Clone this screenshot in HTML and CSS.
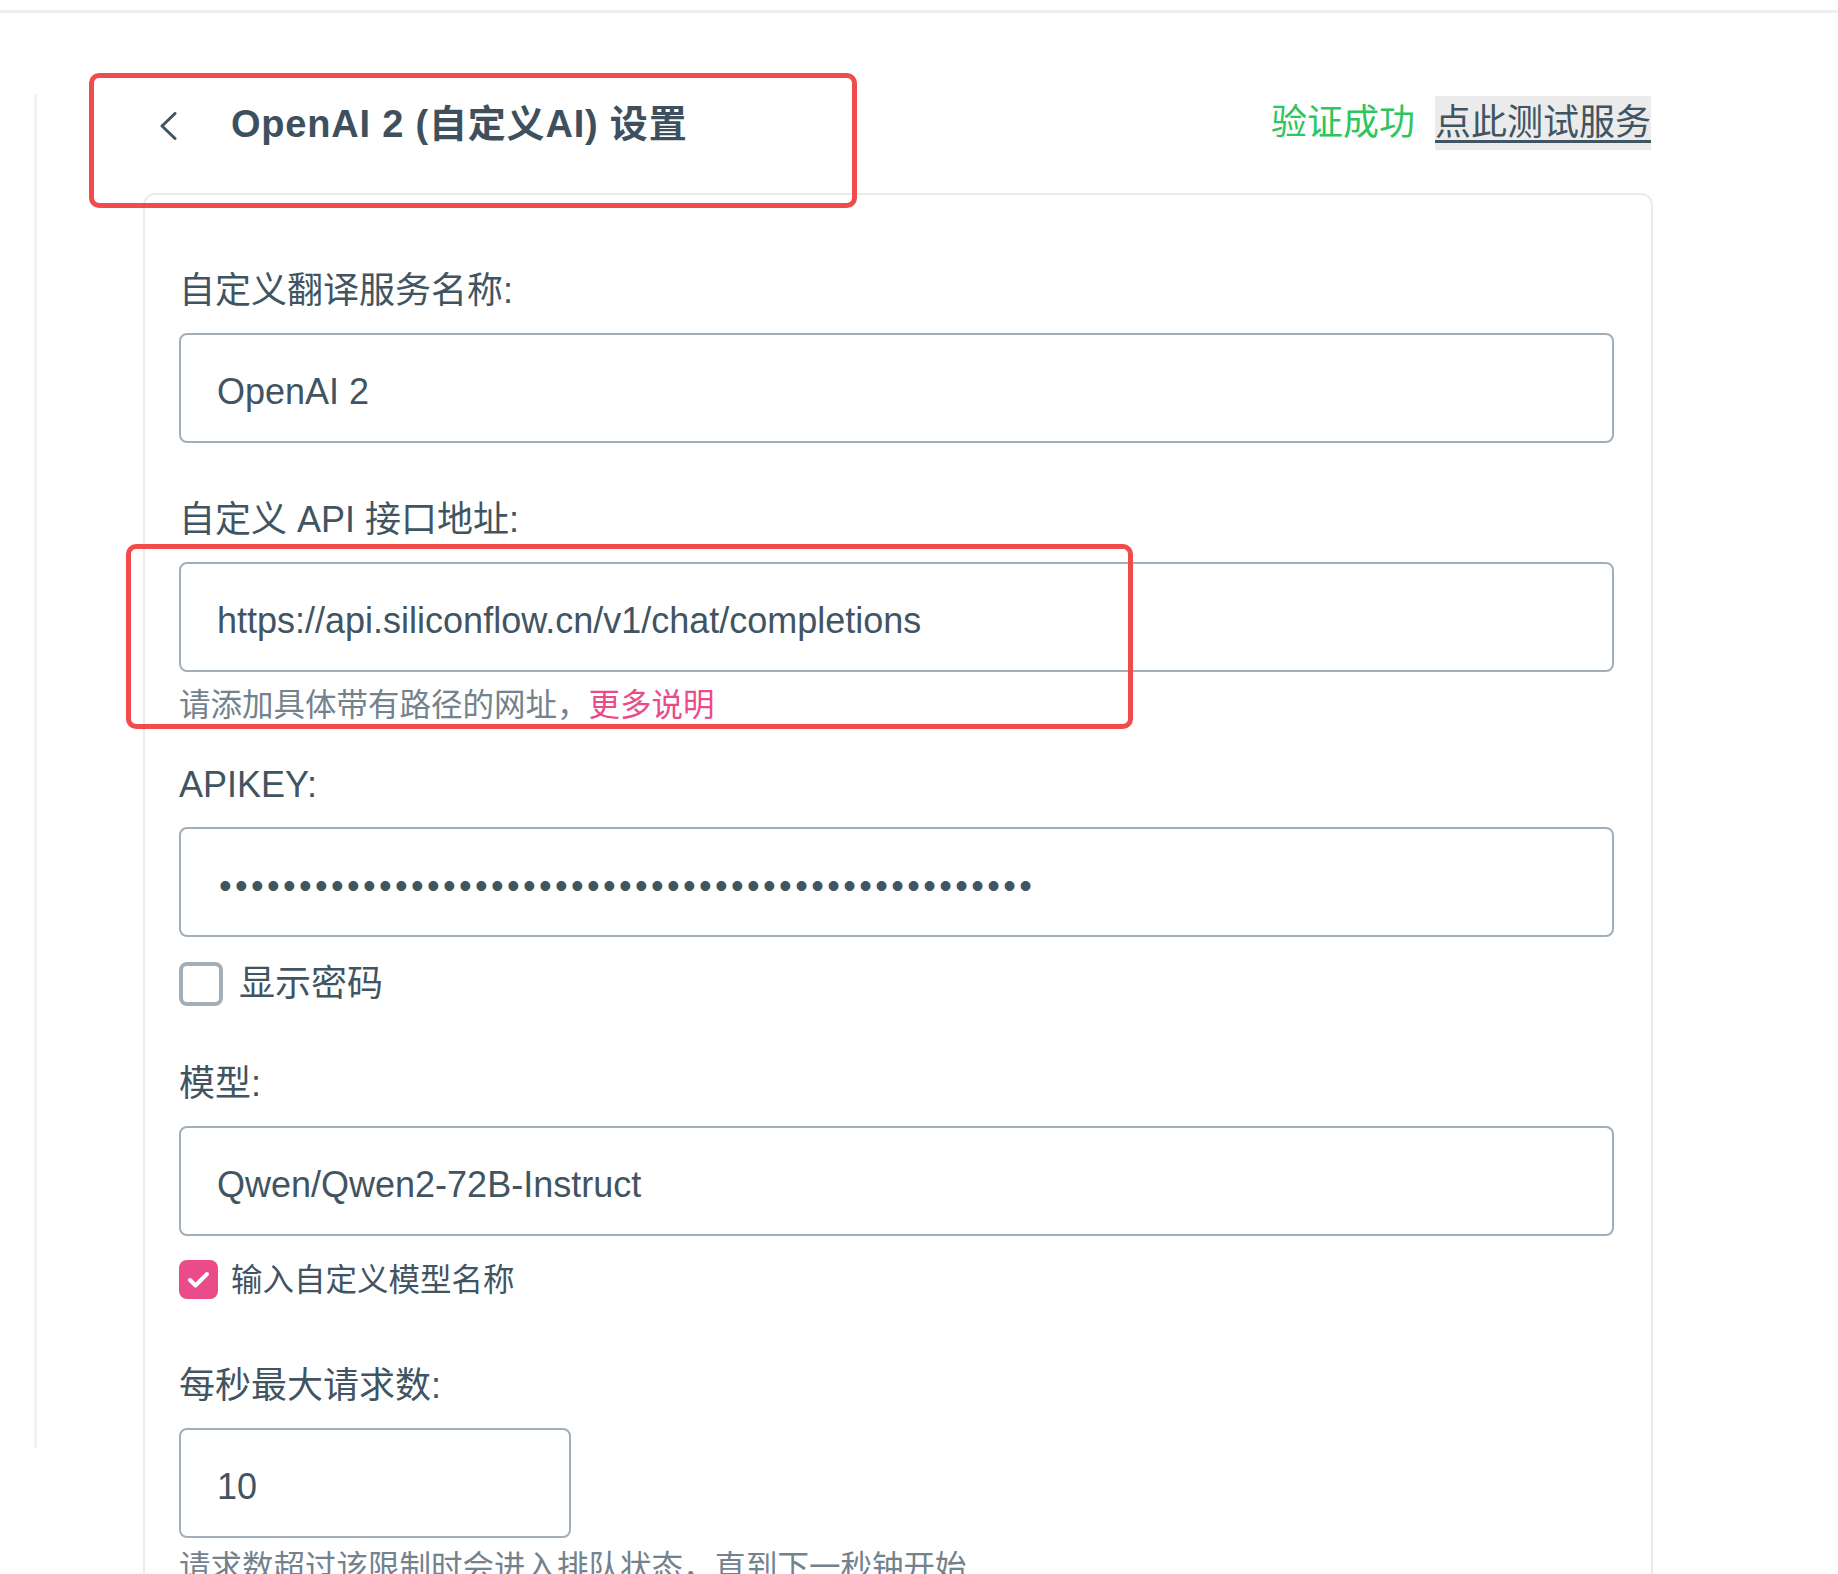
FILE: index.html
```html
<!DOCTYPE html>
<html lang="zh-CN">
<head>
  <meta charset="UTF-8">
  <meta name="viewport" content="width=device-width, initial-scale=1.0">
  <title>OpenAI 2 (自定义AI) 设置</title>
  <link rel="stylesheet" href="styles.css">
</head>
<body>
  <div class="topbar"></div>

  <div class="layout">
    <aside class="sidebar"></aside>

    <main class="main">
      <div class="page-head">
        <a class="back" href="#">
          <svg width="18" height="28" viewBox="0 0 18 28"><polyline points="16,1.5 3,14 16,26.5" fill="none" stroke="#415462" stroke-width="3" stroke-linecap="round" stroke-linejoin="round"/></svg>
        </a>
        <h2 class="title">OpenAI 2 (自定义AI) 设置</h2>
        <div class="status">
          <span class="ok">验证成功</span>
          <a class="test-link" href="#">点此测试服务</a>
        </div>
      </div>

      <article class="card">
        <div class="field field-name">
          <label class="label" for="service-name">自定义翻译服务名称:</label>
          <input class="input" type="text" id="service-name" value="OpenAI 2">
        </div>

        <div class="field field-url">
          <label class="label" for="api-url">自定义 API 接口地址:</label>
          <input class="input" type="text" id="api-url" value="https://api.siliconflow.cn/v1/chat/completions">
          <small class="hint">请添加具体带有路径的网址，<a href="#">更多说明</a></small>
        </div>

        <div class="field field-key">
          <label class="label" for="api-key">APIKEY:</label>
          <input class="input input-secret" type="password" id="api-key" value="sk-abcdefghijklmnopqrstuvwxyzabcdefghijklmnopqrstuv">
          <label class="check">
            <input type="checkbox">
            <span class="box"><svg viewBox="0 0 39 39"><polyline points="11,20 16.5,25.5 28,14" fill="none" stroke="#fff" stroke-width="4" stroke-linecap="round" stroke-linejoin="round"/></svg></span>
            显示密码
          </label>
        </div>

        <div class="field field-model">
          <label class="label" for="model">模型:</label>
          <input class="input" type="text" id="model" value="Qwen/Qwen2-72B-Instruct">
          <label class="check check-small">
            <input type="checkbox" checked>
            <span class="box"><svg viewBox="0 0 39 39"><polyline points="11,20 16.5,25.5 28,14" fill="none" stroke="#fff" stroke-width="4" stroke-linecap="round" stroke-linejoin="round"/></svg></span>
            输入自定义模型名称
          </label>
        </div>

        <div class="field field-rate">
          <label class="label" for="max-rate">每秒最大请求数:</label>
          <input class="input input-short" type="number" id="max-rate" value="10">
          <small class="hint hint-tight">请求数超过该限制时会进入排队状态，直到下一秒钟开始</small>
        </div>
      </article>
    </main>
  </div>

  <!-- red highlight boxes drawn on top of the page -->
  <div class="annot annot-title"></div>
  <div class="annot annot-url"></div>
</body>
</html>
```

FILE: styles.css
```css
body {
  margin: 0;
  background-color: #fff;
  color: #415462;
  font-family: "Liberation Sans", "Noto Sans CJK SC", sans-serif;
  font-size: 36px;
  line-height: 54px;
}
.topbar {
  height: 10px;
  border-bottom: 3px solid #efefef;
}
.layout {
  display: flex;
}
.sidebar {
  width: 34px;
  height: 1354px;
  margin-top: 81px;
  border-right: 3px solid #f2f2f2;
  flex-shrink: 0;
}
.main {
  padding-left: 106px;
  width: 1510px;
}

/* header */
.page-head {
  display: flex;
  align-items: center;
  height: 64px;
  margin-top: 81px;
}
.back {
  display: flex;
  margin-left: 16px;
}
.title {
  margin: 0 0 4px 54px;
  font-size: 38px;
  font-weight: 700;
  letter-spacing: 0.8px;
  color: #3e505d;
}
.status {
  margin-left: auto;
  margin-right: 2px;
  margin-bottom: 6px;
  display: flex;
  align-items: center;
  gap: 20px;
}
.ok {
  color: #2ec55f;
}
.test-link {
  background-color: #ebebeb;
  color: #415462;
  text-decoration: underline;
  text-decoration-thickness: 3px;
  text-underline-offset: 5px;
}

/* card */
.card {
  margin-top: 35px;
  border: 2px solid #ebebeb;
  border-radius: 12px;
  padding: 64px 37px 60px 34px;
}
.field-name { margin-bottom: 45px; }
.field-url { margin-bottom: 24px; }
.field-key { margin-bottom: 41px; }
.field-model { margin-bottom: 51px; }

.label {
  display: block;
  padding-top: 5px;
  margin-bottom: 15px;
}
.input {
  display: block;
  box-sizing: border-box;
  width: 100%;
  height: 110px;
  margin: 0;
  padding: 30px 36px 22px;
  border: 2px solid #a2afb9;
  border-radius: 8px;
  background: #fff;
  color: #415462;
  font-family: inherit;
  font-size: 36px;
  line-height: 54px;
  outline: none;
}
.input-secret {
  padding-left: 38px;
  letter-spacing: 3.4px;
}
.input-short {
  width: 392px;
  -moz-appearance: textfield;
}
.input-short::-webkit-inner-spin-button,
.input-short::-webkit-outer-spin-button {
  -webkit-appearance: none;
  margin: 0;
}
.hint {
  display: block;
  margin-top: 6px;
  padding-top: 4px;
  font-size: 31.5px;
  line-height: 47px;
  color: #73828c;
}
.hint a {
  color: #ea4c89;
  text-decoration: none;
}
.hint-tight {
  margin-top: 2px;
}

/* checkboxes */
.check {
  display: flex;
  align-items: center;
  gap: 16px;
  margin-top: 20px;
  height: 54px;
}
.check input {
  display: none;
}
.check .box {
  box-sizing: border-box;
  width: 44px;
  height: 44px;
  border: 4px solid #a2afb9;
  border-radius: 8px;
  display: flex;
}
.check .box svg {
  display: none;
  width: 100%;
  height: 100%;
}
.check input:checked + .box {
  background-color: #ea4c89;
  border-color: #ea4c89;
}
.check input:checked + .box svg {
  display: block;
}
.check-small {
  font-size: 31.5px;
  height: 47px;
  gap: 13px;
}
.check-small .box {
  width: 39px;
  height: 39px;
  border-width: 0;
}

/* annotation boxes */
.annot {
  position: absolute;
  box-sizing: border-box;
  border: 5px solid #f24b4b;
  border-radius: 10px;
}
.annot-title {
  left: 89px;
  top: 73px;
  width: 768px;
  height: 135px;
}
.annot-url {
  left: 126px;
  top: 544px;
  width: 1007px;
  height: 185px;
}
```
